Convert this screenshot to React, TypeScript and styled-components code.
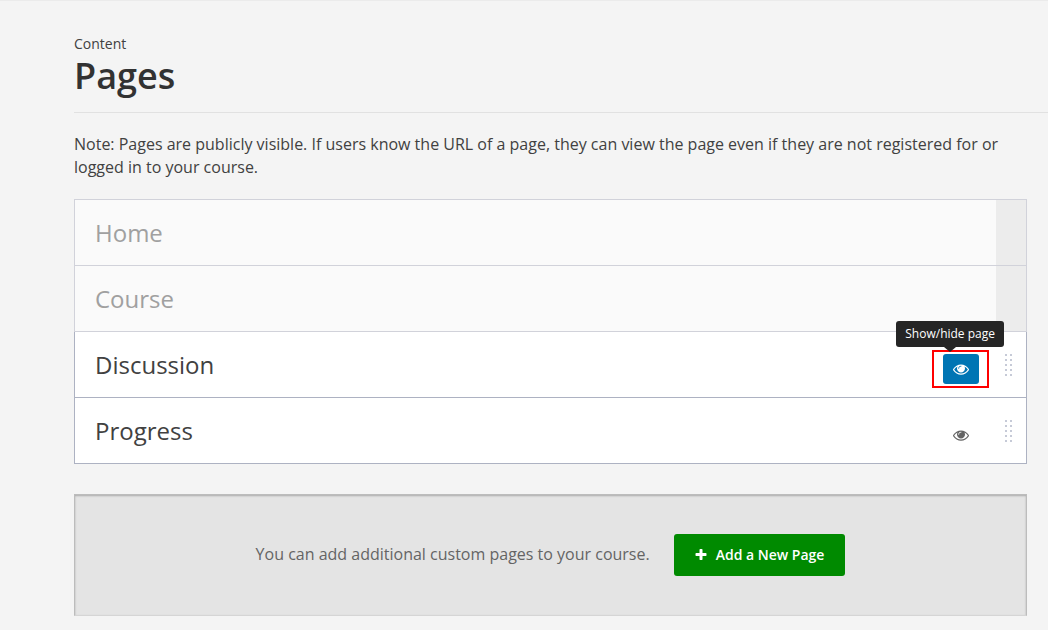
import React from "react";
import styled, { createGlobalStyle } from "styled-components";

const GlobalStyle = createGlobalStyle`
  *, *::before, *::after { box-sizing: border-box; }
  body {
    margin: 0;
    background: #f4f4f4;
    color: #414141;
    font-family: "Open Sans", "Liberation Sans", sans-serif;
    font-size: 16px;
  }
`;

const Page = styled.div`
  border-top: 1px solid #ebebeb;
  padding: 32px 0 14px 74px;
`;

const Header = styled.header`
  border-bottom: 1px solid #e1e1e1;
  padding-bottom: 14px;
  margin-bottom: 20px;
`;

const Title = styled.h1`
  margin: 0;
  display: flex;
  flex-direction: column;
  color: #323232;
  font-size: 36px;
  font-weight: 600;
  line-height: 44px;
`;

const Subtitle = styled.small`
  color: #414141;
  font-size: 14px;
  font-weight: 400;
  line-height: 21px;
`;

const Main = styled.main`
  padding-right: 21px;
`;

const Note = styled.p`
  margin: 0 0 20px;
  line-height: 23px;
`;

const PageList = styled.ol`
  list-style: none;
  margin: 0 0 30px;
  padding: 0;
  border-top: 1px solid #d1d2da;
  display: flex;
  flex-direction: column;
`;

const PageRow = styled.li<{ $fixed?: boolean }>`
  display: flex;
  align-items: stretch;
  height: 66px;
  border: 1px solid ${(p) => (p.$fixed ? "#d1d2da" : "#adb2c2")};
  border-top: 0;
  background: ${(p) => (p.$fixed ? "#fafafa" : "#fff")};
  color: ${(p) => (p.$fixed ? "#a0a0a0" : "#414141")};
`;

const PageName = styled.h2`
  flex: 1;
  margin: 0;
  padding: 0 20px;
  font-size: 24px;
  font-weight: 400;
  line-height: 65px;
`;

const FixedHandle = styled.div`
  width: 30px;
  background: #ececec;
`;

const Actions = styled.div`
  display: flex;
  align-items: center;
  padding-top: 8px;
  margin-right: 26px;
`;

const ActionSlot = styled.div`
  position: relative;
  display: flex;
`;

const VisibilityButton = styled.button<{ $active?: boolean }>`
  display: flex;
  align-items: center;
  justify-content: center;
  width: 36px;
  height: 30px;
  padding: 0;
  border: 0;
  border-radius: 3px;
  background: ${(p) => (p.$active ? "#0075b4" : "transparent")};
  color: ${(p) => (p.$active ? "#fff" : "#646464")};
  cursor: pointer;
`;

const Highlight = styled.span`
  position: absolute;
  inset: -4px -10px -4px -11px;
  border: 2px solid #f00;
  pointer-events: none;
`;

const Tooltip = styled.span`
  position: absolute;
  right: -25px;
  bottom: 37px;
  padding: 0 9px;
  border-radius: 3px;
  background: #252525;
  color: #fff;
  font-size: 12px;
  line-height: 26px;
  white-space: nowrap;

  &::after {
    content: "";
    position: absolute;
    top: 100%;
    left: 50%;
    margin-left: -6px;
    border: 6px solid transparent;
    border-top: 5px solid #252525;
    border-bottom: 0;
  }
`;

const DragHandle = styled.div`
  display: grid;
  grid-template-columns: 2px 2px;
  grid-auto-rows: 2px;
  gap: 3px;
  align-self: center;
  margin-right: 14px;
`;

const Dot = styled.span`
  background: #c6cad7;
`;

const AddPanel = styled.section`
  display: flex;
  align-items: center;
  justify-content: center;
  gap: 24px;
  padding: 39px 20px;
  border: 1px solid #bcbcbc;
  border-bottom-color: #d5d5d5;
  background: #e4e4e4;
  box-shadow: inset 0 1px 2px rgba(0, 0, 0, 0.25);
`;

const AddText = styled.p`
  margin: 0;
  padding-bottom: 2px;
  color: #646464;
  line-height: 24px;
`;

const AddButton = styled.button`
  display: flex;
  align-items: center;
  justify-content: center;
  gap: 8px;
  height: 42px;
  padding: 0 21px 0 20px;
  border: 0;
  border-radius: 3px;
  background: #008a00;
  color: #fff;
  font-family: inherit;
  font-size: 14px;
  font-weight: 600;
  line-height: 20px;
  cursor: pointer;
`;

const EyeIcon = () => (
  <svg width="16" height="16" viewBox="0 0 1792 1792" fill="currentColor" aria-hidden="true">
    <path d="M1664 960q-152-236-381-353 61 104 61 225 0 185-131.5 316.5t-316.5 131.5-316.5-131.5-131.5-316.5q0-121 61-225-229 117-381 353 133 205 333.5 326.5t434.5 121.5 434.5-121.5 333.5-326.5zm-720-384q0-20-14-34t-34-14q-125 0-214.5 89.5t-89.5 214.5q0 20 14 34t34 14 34-14 14-34q0-86 61-147t147-61q20 0 34-14t14-34zm848 384q0 34-20 69-140 230-376.5 368.5t-499.5 138.5-499.5-139-376.5-368q-20-35-20-69t20-69q140-229 376.5-368t499.5-139 499.5 139 376.5 368q20 35 20 69z" />
  </svg>
);

const PlusIcon = () => (
  <svg width="14" height="14" viewBox="0 0 1792 1792" fill="currentColor" aria-hidden="true">
    <path d="M1600 736v192q0 40-28 68t-68 28h-416v416q0 40-28 68t-68 28h-192q-40 0-68-28t-28-68v-416h-416q-40 0-68-28t-28-68v-192q0-40 28-68t68-28h416v-416q0-40 28-68t68-28h192q40 0 68 28t28 68v416h416q40 0 68 28t28 68z" />
  </svg>
);

const fixedPages = ["Home", "Course"];
const editablePages = [
  { name: "Discussion", focused: true },
  { name: "Progress", focused: false },
];

export default function App() {
  return (
    <>
      <GlobalStyle />
      <Page>
        <Header>
          <Title>
            <Subtitle>Content</Subtitle>
            Pages
          </Title>
        </Header>
        <Main>
          <Note>
            Note: Pages are publicly visible. If users know the URL of a page, they can view the
            page even if they are not registered for or logged in to your course.
          </Note>
          <PageList>
            {fixedPages.map((name) => (
              <PageRow key={name} $fixed>
                <PageName>{name}</PageName>
                <FixedHandle />
              </PageRow>
            ))}
            {editablePages.map(({ name, focused }) => (
              <PageRow key={name}>
                <PageName>{name}</PageName>
                <Actions>
                  <ActionSlot>
                    <VisibilityButton type="button" $active={focused} aria-label="Show/hide page">
                      <EyeIcon />
                    </VisibilityButton>
                    {focused && <Highlight />}
                    {focused && <Tooltip role="tooltip">Show/hide page</Tooltip>}
                  </ActionSlot>
                </Actions>
                <DragHandle>
                  {Array.from({ length: 10 }, (_, i) => (
                    <Dot key={i} />
                  ))}
                </DragHandle>
              </PageRow>
            ))}
          </PageList>
          <AddPanel>
            <AddText>You can add additional custom pages to your course.</AddText>
            <AddButton type="button">
              <PlusIcon />
              Add a New Page
            </AddButton>
          </AddPanel>
        </Main>
      </Page>
    </>
  );
}
